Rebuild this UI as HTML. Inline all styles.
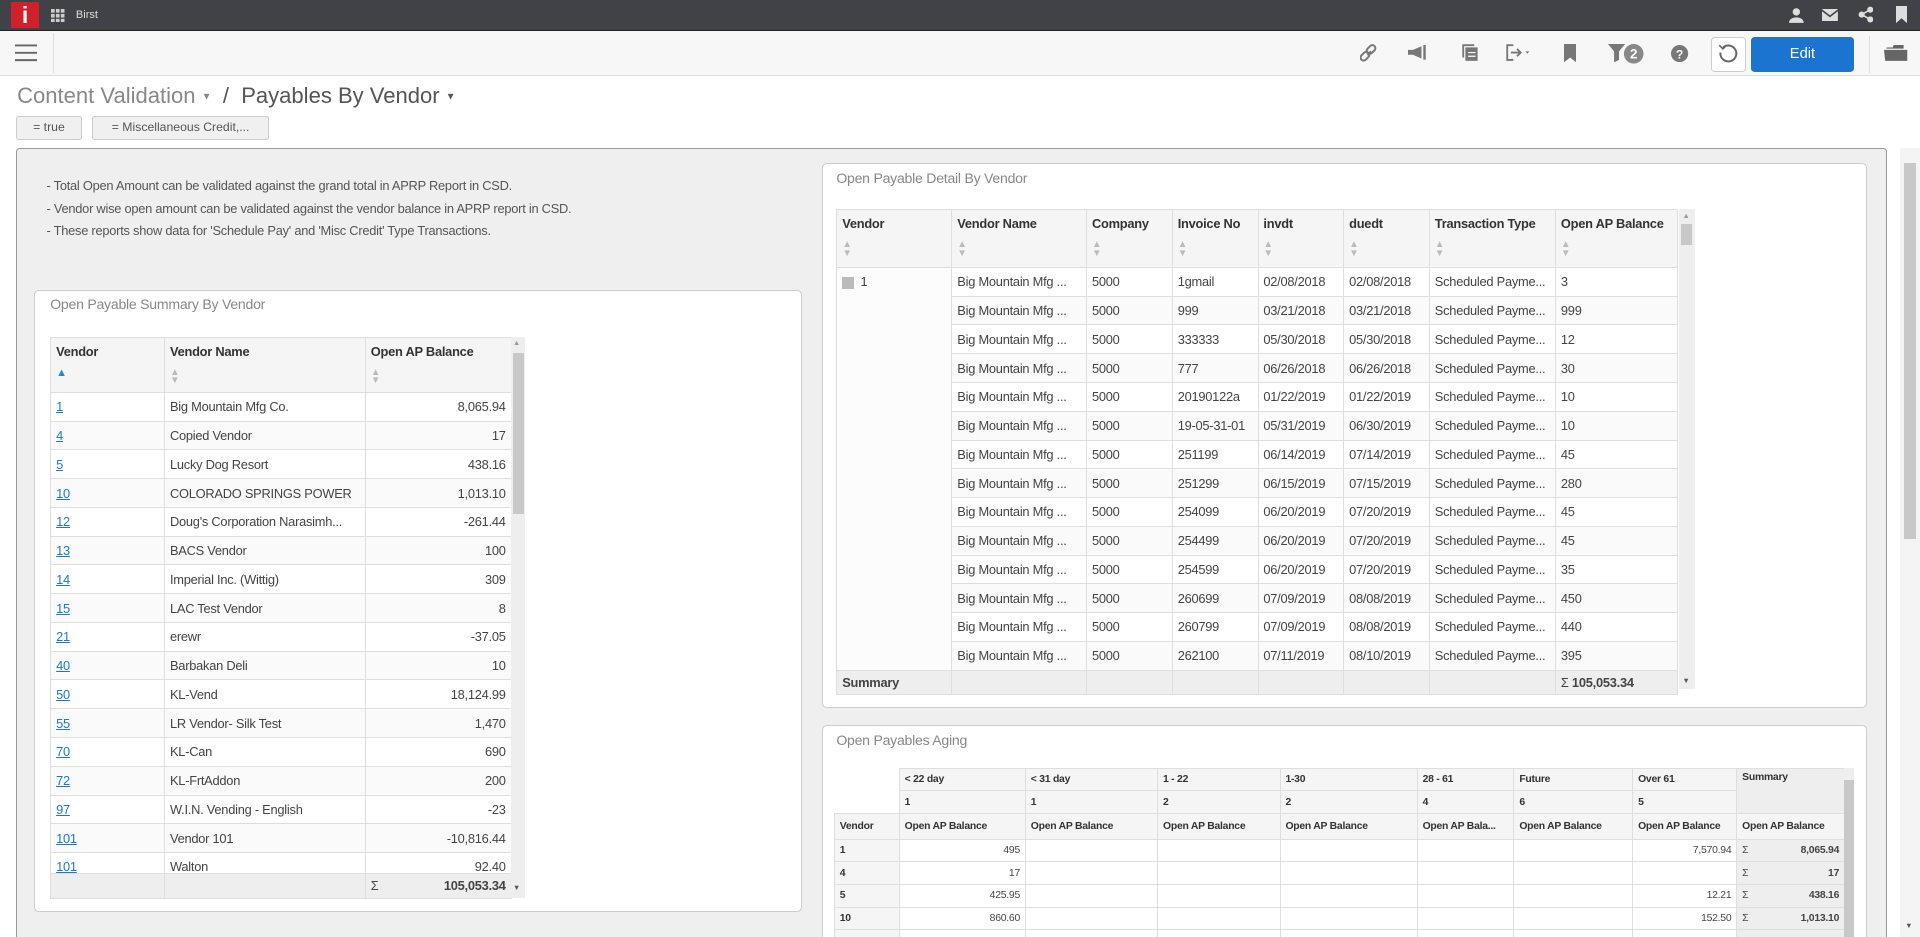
<!DOCTYPE html>
<html><head><meta charset="utf-8">
<style>
*{box-sizing:border-box;margin:0;padding:0}
html,body{width:1920px;height:937px;overflow:hidden;background:#fff}
#w{zoom:1.22449;width:1568px;height:765px;position:relative;overflow:hidden;font-family:"Liberation Sans",sans-serif;color:#333}
.abs{position:absolute}
#top{left:0;top:0;width:1568px;height:25px;background:#414247;border-bottom:1px solid #222}
#tb{left:0;top:25px;width:1568px;height:37px;background:#f7f7f7;border-bottom:1px solid #ddd}
#main{left:13px;top:121px;width:1528px;height:660px;background:#efefef;border:1px solid #999;border-radius:3px}
.card{position:absolute;background:#fff;border:1px solid #ccc;border-radius:4px}
.ct{position:absolute;font-size:11.5px;color:#888;letter-spacing:-0.2px}
table{border-collapse:collapse;table-layout:fixed;font-size:10.5px;color:#444;letter-spacing:-0.2px}
td,th{border:1px solid #dedede;padding:0 4px;white-space:nowrap;overflow:hidden;text-overflow:ellipsis;text-align:left}
th{background:#f5f5f5;font-weight:bold;color:#333;vertical-align:top;padding-top:5px}
tr.d td{height:23.5px}
tr.d:nth-child(odd) td{background:#fafafa}
.r{text-align:right}
.lk{color:#1a7ac8;text-decoration:underline}
.sort{display:block;margin-top:8px;color:#bbb;font-size:8px;line-height:7px}
.sum td{background:#eee;font-weight:bold;height:20px}
.sb{position:absolute;background:#eee}
.th{position:absolute;background:#c8c8c8}
.ag td,.ag th{font-size:8.5px;padding:0 4px;height:18.5px}
.ag th{padding-top:0;vertical-align:middle}
</style></head><body><div id="w">
<div id="top" class="abs">
 <div class="abs" style="left:9px;top:2px;width:23px;height:21px;background:#d0202c;color:#fff;font:bold 19px 'Liberation Sans',sans-serif;text-align:center;line-height:22px">i</div>
 <svg class="abs" style="left:42px;top:7px" width="11" height="11" fill="#ccc"><rect x="0" y="0" width="3" height="3"/><rect x="4" y="0" width="3" height="3"/><rect x="8" y="0" width="3" height="3"/><rect x="0" y="4" width="3" height="3"/><rect x="4" y="4" width="3" height="3"/><rect x="8" y="4" width="3" height="3"/><rect x="0" y="8" width="3" height="3"/><rect x="4" y="8" width="3" height="3"/><rect x="8" y="8" width="3" height="3"/></svg>
 <div class="abs" style="left:62px;top:7px;font-size:9px;color:#ddd">Birst</div>
 <svg class="abs" style="left:1461px;top:6px" width="12" height="13" fill="#ddd"><circle cx="6" cy="4" r="3"/><path d="M0 13 C0 7 12 7 12 13Z"/></svg>
 <svg class="abs" style="left:1488px;top:7px" width="13" height="10" fill="#ddd"><rect width="13" height="10" rx="1"/><path d="M0 1 L6.5 6 L13 1" stroke="#414247" fill="none" stroke-width="1.3"/></svg>
 <svg class="abs" style="left:1517px;top:5px" width="13" height="14" fill="#ddd"><circle cx="10" cy="3" r="2.5"/><circle cx="3" cy="7" r="2.5"/><circle cx="10" cy="11" r="2.5"/><path d="M3 7L10 3M3 7L10 11" stroke="#ddd" stroke-width="1.3"/></svg>
 <svg class="abs" style="left:1548px;top:5px" width="9" height="14" fill="#ddd"><path d="M0 0H9V14L4.5 10L0 14Z"/></svg>
</div>
<div id="tb" class="abs">
 <svg class="abs" style="left:12px;top:10px" width="18" height="16"><path d="M0 2H18M0 8H18M0 14H18" stroke="#666" stroke-width="1.6"/></svg>
 <div class="abs" style="left:43px;top:2px;width:1px;height:33px;background:#ddd"></div>
 <svg class="abs" style="left:1111px;top:11px" width="15" height="15" fill="none" stroke="#777" stroke-width="1.6"><path d="M6 9L9 6"/><rect x="6.5" y="0.5" width="5" height="8" rx="2.5" transform="rotate(45 9 4.5)"/><rect x="1.5" y="6" width="5" height="8" rx="2.5" transform="rotate(45 4 10)"/></svg>
 <svg class="abs" style="left:1150px;top:12px" width="15" height="12" fill="#777"><path d="M0 4H4L11 1V11L4 8H0Z"/><rect x="12.5" y="0" width="2" height="12"/></svg>
 <svg class="abs" style="left:1194px;top:11px" width="13" height="14" fill="none" stroke="#777" stroke-width="1.5"><path d="M1 11V1H10"/><rect x="3.5" y="3.5" width="8.5" height="9.5" fill="#777"/><path d="M5 7H11M5 10H11" stroke="#fff" stroke-width="1"/></svg>
 <svg class="abs" style="left:1230px;top:11px" width="24" height="14" fill="none" stroke="#777" stroke-width="1.5"><path d="M6 1H1V13H6"/><path d="M4 7H12M9 4L12 7L9 10"/><path d="M16 6L19 6L17.5 8Z" fill="#777" stroke="none"/></svg>
 <svg class="abs" style="left:1277px;top:11px" width="10" height="15" fill="#777"><path d="M0 0H10V15L5 11L0 15Z"/></svg>
 <svg class="abs" style="left:1313px;top:11px" width="30" height="16"><path d="M0 0H14L9 6V13L5 15V6Z" fill="#777"/><circle cx="21" cy="8" r="8" fill="#888"/><text x="21" y="12" font-size="11" font-weight="bold" fill="#fff" text-anchor="middle" font-family="Liberation Sans">2</text></svg>
 <svg class="abs" style="left:1365px;top:12px" width="14" height="14"><circle cx="7" cy="7" r="7" fill="#777"/><text x="7" y="11" font-size="10" font-weight="bold" fill="#fff" text-anchor="middle" font-family="Liberation Sans">?</text></svg>
 <div class="abs" style="left:1397px;top:5px;width:29px;height:29px;border:1px solid #ccc;border-radius:3px;background:#fff"></div>
 <svg class="abs" style="left:1403px;top:11px" width="16" height="17" fill="none" stroke="#666" stroke-width="1.6"><path d="M4 3A6.5 6.5 0 1 1 2 7"/><path d="M1 1L4 4L7 1" stroke-width="1.3"/></svg>
 <div class="abs" style="left:1430px;top:5px;width:84px;height:29px;background:#1b74cf;border-radius:3px;color:#fff;font-size:12px;text-align:center;line-height:29px">Edit</div>
 <div class="abs" style="left:1526px;top:4px;width:1px;height:31px;background:#ddd"></div>
 <svg class="abs" style="left:1539px;top:12px" width="19" height="13" fill="#666"><path d="M2 2H7L8 0H16V3H2Z"/><path d="M0 4H19V13H1Z"/></svg>
</div>
<div class="abs" style="left:14px;top:68px;font-size:18px;color:#888">Content Validation <span style="font-size:8px;vertical-align:middle">▼</span></div>
<div class="abs" style="left:182px;top:68px;font-size:18px;color:#555">/ &nbsp;Payables By Vendor <span style="font-size:8px;vertical-align:middle">▼</span></div>
<div class="abs" style="left:13px;top:95px;width:54px;height:19px;background:#f0f0f0;border:1px solid #ccc;border-radius:2px;font-size:10px;color:#555;text-align:center;line-height:17px">= true</div>
<div class="abs" style="left:75px;top:95px;width:145px;height:19px;background:#f0f0f0;border:1px solid #ccc;border-radius:2px;font-size:10px;color:#555;text-align:center;line-height:17px">= Miscellaneous Credit,...</div>
<div id="main" class="abs"></div>
<div class="abs" style="left:38px;top:143px;font-size:10.5px;color:#555;line-height:18.5px;letter-spacing:-0.2px">- Total Open Amount can be validated against the grand total in APRP Report in CSD.<br>- Vendor wise open amount can be validated against the vendor balance in APRP report in CSD.<br>- These reports show data for 'Schedule Pay' and 'Misc Credit' Type Transactions.</div>
<div class="sb" style="left:1552px;top:121px;width:16px;height:644px;background:#f4f4f4"></div>
<div class="th" style="left:1555px;top:133px;width:10px;height:307px"></div>

<!-- left card -->
<div class="card" style="left:28px;top:237px;width:627px;height:508px"></div>
<div class="ct" style="left:41px;top:242px">Open Payable Summary By Vendor</div>
<div class="abs" style="left:41px;top:275px;height:458px;overflow:hidden">
<table style="width:376px">
<col style="width:93px"><col style="width:164px"><col style="width:119px">
<tr><th style="height:45px">Vendor<span class="sort" style="color:#1a8ae0;font-size:9px">▲</span></th><th>Vendor Name<span class="sort">▲<br>▼</span></th><th>Open AP Balance<span class="sort">▲<br>▼</span></th></tr>
<tr class="d"><td class="lk">1</td><td>Big Mountain Mfg Co.</td><td class="r">8,065.94</td></tr>
<tr class="d"><td class="lk">4</td><td>Copied Vendor</td><td class="r">17</td></tr>
<tr class="d"><td class="lk">5</td><td>Lucky Dog Resort</td><td class="r">438.16</td></tr>
<tr class="d"><td class="lk">10</td><td>COLORADO SPRINGS POWER</td><td class="r">1,013.10</td></tr>
<tr class="d"><td class="lk">12</td><td>Doug's Corporation Narasimh...</td><td class="r">-261.44</td></tr>
<tr class="d"><td class="lk">13</td><td>BACS Vendor</td><td class="r">100</td></tr>
<tr class="d"><td class="lk">14</td><td>Imperial Inc. (Wittig)</td><td class="r">309</td></tr>
<tr class="d"><td class="lk">15</td><td>LAC Test Vendor</td><td class="r">8</td></tr>
<tr class="d"><td class="lk">21</td><td>erewr</td><td class="r">-37.05</td></tr>
<tr class="d"><td class="lk">40</td><td>Barbakan Deli</td><td class="r">10</td></tr>
<tr class="d"><td class="lk">50</td><td>KL-Vend</td><td class="r">18,124.99</td></tr>
<tr class="d"><td class="lk">55</td><td>LR Vendor- Silk Test</td><td class="r">1,470</td></tr>
<tr class="d"><td class="lk">70</td><td>KL-Can</td><td class="r">690</td></tr>
<tr class="d"><td class="lk">72</td><td>KL-FrtAddon</td><td class="r">200</td></tr>
<tr class="d"><td class="lk">97</td><td>W.I.N. Vending - English</td><td class="r">-23</td></tr>
<tr class="d"><td class="lk">101</td><td>Vendor 101</td><td class="r">-10,816.44</td></tr>
<tr class="d"><td class="lk">101</td><td>Walton</td><td class="r">92.40</td></tr>
</table></div>
<div class="abs" style="left:41px;top:713px">
<table style="width:376px"><col style="width:93px"><col style="width:164px"><col style="width:119px">
<tr class="sum"><td></td><td></td><td class="r" style="height:20px"><span style="float:left;font-weight:normal">Σ</span>105,053.34</td></tr></table></div>
<div class="sb" style="left:417px;top:275px;width:12px;height:458px"></div>
<div class="th" style="left:419px;top:288px;width:9px;height:132px"></div>
<div class="abs" style="left:419px;top:276px;font-size:6px;color:#999">▲</div>
<div class="abs" style="left:419px;top:721px;font-size:6px;color:#555">▼</div>

<!-- right top card -->
<div class="card" style="left:671px;top:133px;width:854px;height:445px"></div>
<div class="ct" style="left:683px;top:139px">Open Payable Detail By Vendor</div>
<div class="abs" style="left:683px;top:171px">
<table style="width:687px">
<col style="width:94px"><col style="width:110px"><col style="width:70px"><col style="width:70px"><col style="width:70px"><col style="width:70px"><col style="width:103px"><col style="width:100px">
<tr><th style="height:47px">Vendor<span class="sort">▲<br>▼</span></th><th>Vendor Name<span class="sort">▲<br>▼</span></th><th>Company<span class="sort">▲<br>▼</span></th><th>Invoice No<span class="sort">▲<br>▼</span></th><th>invdt<span class="sort">▲<br>▼</span></th><th>duedt<span class="sort">▲<br>▼</span></th><th>Transaction Type<span class="sort">▲<br>▼</span></th><th>Open AP Balance<span class="sort">▲<br>▼</span></th></tr>
<tr class="d"><td rowspan="14" style="vertical-align:top;padding-top:5px;background:#fcfcfc"><span style="display:inline-block;width:10px;height:10px;background:#bbb;vertical-align:middle;margin-right:5px"></span>1</td><td>Big Mountain Mfg ...</td><td>5000</td><td>1gmail</td><td>02/08/2018</td><td>02/08/2018</td><td>Scheduled Payme...</td><td>3</td></tr>
<tr class="d"><td>Big Mountain Mfg ...</td><td>5000</td><td>999</td><td>03/21/2018</td><td>03/21/2018</td><td>Scheduled Payme...</td><td>999</td></tr>
<tr class="d"><td>Big Mountain Mfg ...</td><td>5000</td><td>333333</td><td>05/30/2018</td><td>05/30/2018</td><td>Scheduled Payme...</td><td>12</td></tr>
<tr class="d"><td>Big Mountain Mfg ...</td><td>5000</td><td>777</td><td>06/26/2018</td><td>06/26/2018</td><td>Scheduled Payme...</td><td>30</td></tr>
<tr class="d"><td>Big Mountain Mfg ...</td><td>5000</td><td>20190122a</td><td>01/22/2019</td><td>01/22/2019</td><td>Scheduled Payme...</td><td>10</td></tr>
<tr class="d"><td>Big Mountain Mfg ...</td><td>5000</td><td>19-05-31-01</td><td>05/31/2019</td><td>06/30/2019</td><td>Scheduled Payme...</td><td>10</td></tr>
<tr class="d"><td>Big Mountain Mfg ...</td><td>5000</td><td>251199</td><td>06/14/2019</td><td>07/14/2019</td><td>Scheduled Payme...</td><td>45</td></tr>
<tr class="d"><td>Big Mountain Mfg ...</td><td>5000</td><td>251299</td><td>06/15/2019</td><td>07/15/2019</td><td>Scheduled Payme...</td><td>280</td></tr>
<tr class="d"><td>Big Mountain Mfg ...</td><td>5000</td><td>254099</td><td>06/20/2019</td><td>07/20/2019</td><td>Scheduled Payme...</td><td>45</td></tr>
<tr class="d"><td>Big Mountain Mfg ...</td><td>5000</td><td>254499</td><td>06/20/2019</td><td>07/20/2019</td><td>Scheduled Payme...</td><td>45</td></tr>
<tr class="d"><td>Big Mountain Mfg ...</td><td>5000</td><td>254599</td><td>06/20/2019</td><td>07/20/2019</td><td>Scheduled Payme...</td><td>35</td></tr>
<tr class="d"><td>Big Mountain Mfg ...</td><td>5000</td><td>260699</td><td>07/09/2019</td><td>08/08/2019</td><td>Scheduled Payme...</td><td>450</td></tr>
<tr class="d"><td>Big Mountain Mfg ...</td><td>5000</td><td>260799</td><td>07/09/2019</td><td>08/08/2019</td><td>Scheduled Payme...</td><td>440</td></tr>
<tr class="d"><td>Big Mountain Mfg ...</td><td>5000</td><td>262100</td><td>07/11/2019</td><td>08/10/2019</td><td>Scheduled Payme...</td><td>395</td></tr>
<tr class="sum"><td>Summary</td><td></td><td></td><td></td><td></td><td></td><td></td><td><span style="font-weight:normal">Σ</span> 105,053.34</td></tr>
</table></div>
<div class="sb" style="left:1371px;top:171px;width:13px;height:392px"></div>
<div class="th" style="left:1373px;top:183px;width:9px;height:17px"></div>
<div class="abs" style="left:1374px;top:172px;font-size:6px;color:#999">▲</div>
<div class="abs" style="left:1374px;top:552px;font-size:6px;color:#555">▼</div>

<!-- bottom card -->
<div class="card" style="left:671px;top:592px;width:854px;height:200px"></div>
<div class="ct" style="left:683px;top:598px">Open Payables Aging</div>
<div class="abs ag" style="left:681px;top:627px">
<table class="ag" style="width:825px">
<col style="width:53px"><col style="width:103px"><col style="width:108px"><col style="width:100px"><col style="width:112px"><col style="width:79px"><col style="width:97px"><col style="width:85px"><col style="width:88px">
<tr><td style="border:none;background:#fff;height:17px"></td><th style="height:17px">&lt; 22 day</th><th>&lt; 31 day</th><th>1 - 22</th><th>1-30</th><th>28 - 61</th><th>Future</th><th>Over 61</th><th rowspan="2" style="background:#eee;vertical-align:top;padding-top:3px">Summary</th></tr>
<tr><td style="border:none;background:#fff;height:16px"></td><th style="height:16px">1</th><th>1</th><th>2</th><th>2</th><th>4</th><th>6</th><th>5</th></tr>
<tr><th style="height:21px">Vendor</th><th>Open AP Balance</th><th>Open AP Balance</th><th>Open AP Balance</th><th>Open AP Balance</th><th>Open AP Bala...</th><th>Open AP Balance</th><th>Open AP Balance</th><th>Open AP Balance</th></tr>
<tr><th>1</th><td class="r">495</td><td></td><td></td><td></td><td></td><td></td><td class="r">7,570.94</td><td class="r" style="background:#eee;font-weight:bold"><span style="float:left;font-weight:normal">Σ</span>8,065.94</td></tr>
<tr><th>4</th><td class="r">17</td><td></td><td></td><td></td><td></td><td></td><td></td><td class="r" style="background:#eee;font-weight:bold"><span style="float:left;font-weight:normal">Σ</span>17</td></tr>
<tr><th>5</th><td class="r">425.95</td><td></td><td></td><td></td><td></td><td></td><td class="r">12.21</td><td class="r" style="background:#eee;font-weight:bold"><span style="float:left;font-weight:normal">Σ</span>438.16</td></tr>
<tr><th>10</th><td class="r">860.60</td><td></td><td></td><td></td><td></td><td></td><td class="r">152.50</td><td class="r" style="background:#eee;font-weight:bold"><span style="float:left;font-weight:normal">Σ</span>1,013.10</td></tr>
<tr><th>12</th><td></td><td></td><td></td><td></td><td></td><td class="r">-261.44</td><td></td><td class="r" style="background:#eee;font-weight:bold"><span style="float:left;font-weight:normal">Σ</span>-261.44</td></tr>
</table></div>
<div class="sb" style="left:1506px;top:627px;width:8px;height:140px"></div>
<div class="th" style="left:1506px;top:637px;width:8px;height:130px"></div>
<div class="abs" style="left:1556px;top:752px;font-size:6px;color:#555">▼</div>
</div></body></html>
